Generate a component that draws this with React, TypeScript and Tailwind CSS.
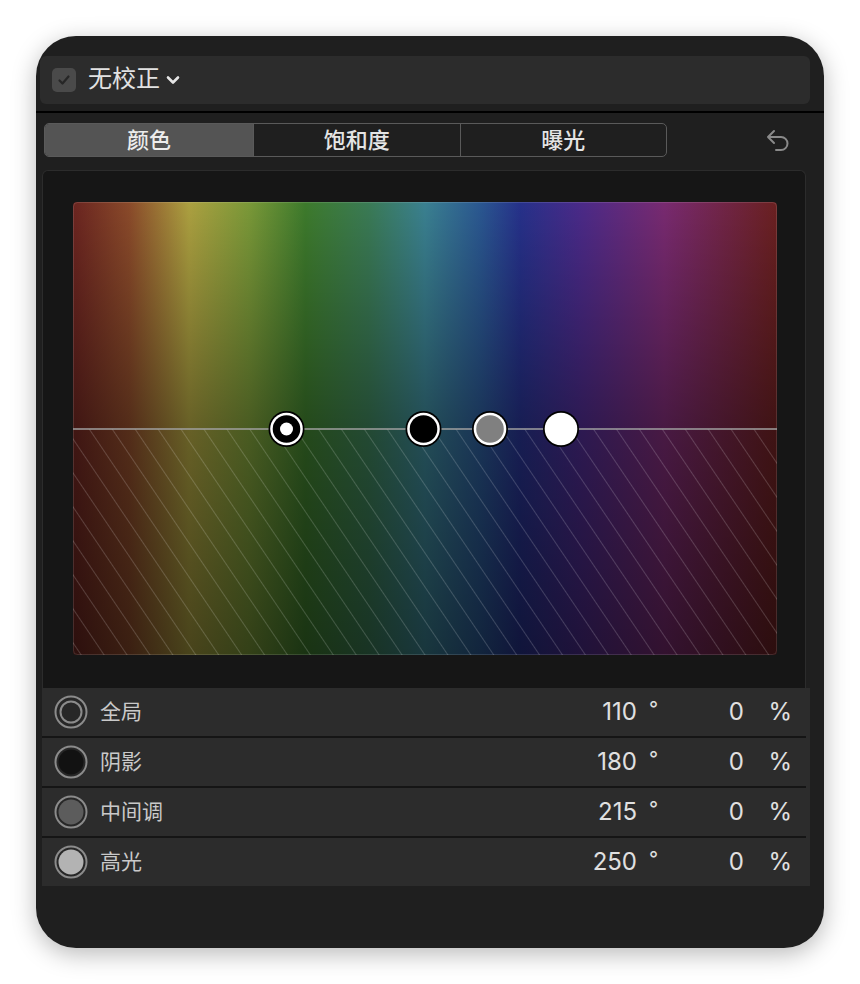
import React from "react";

type Range = {
  label: string;
  angle: string;
  amount: string;
  fill: string | null;
};

const ranges: Range[] = [
  { label: "全局", angle: "110", amount: "0", fill: null },
  { label: "阴影", angle: "180", amount: "0", fill: "#121212" },
  { label: "中间调", angle: "215", amount: "0", fill: "#5c5c5c" },
  { label: "高光", angle: "250", amount: "0", fill: "#b3b3b3" },
];

const tabs = ["颜色", "饱和度", "曝光"];

function RangeIcon({ fill }: { fill: string | null }) {
  return (
    <svg width="34" height="34" viewBox="0 0 34 34" aria-hidden>
      <circle cx="17" cy="17" r="15.5" fill="#272727" stroke="#8b8b8b" strokeWidth="2" />
      {fill ? (
        <circle cx="17" cy="17" r="12.5" fill={fill} />
      ) : (
        <circle cx="17" cy="17" r="10.5" fill="none" stroke="#8b8b8b" strokeWidth="2" />
      )}
    </svg>
  );
}

// 色板：色相横向铺开，下半部分带斜线
function ColorBoard() {
  const knobs = [
    { x: 213.5, color: "#000", dot: true },
    { x: 350.5, color: "#000", dot: false },
    { x: 417, color: "#808080", dot: false },
    { x: 488, color: "#fff", dot: false },
  ];
  return (
    <svg width="704" height="453" viewBox="0 0 704 453" className="block">
      <defs>
        <linearGradient id="hue" x1="0" x2="1" y1="0" y2="0">
          <stop offset="0" stopColor="#6a2420" />
          <stop offset="0.08" stopColor="#8a4a2a" />
          <stop offset="0.165" stopColor="#aca040" />
          <stop offset="0.25" stopColor="#7a9838" />
          <stop offset="0.33" stopColor="#3d7a2c" />
          <stop offset="0.42" stopColor="#3a7a55" />
          <stop offset="0.5" stopColor="#3a8090" />
          <stop offset="0.58" stopColor="#2a5690" />
          <stop offset="0.635" stopColor="#26318a" />
          <stop offset="0.72" stopColor="#4a2a88" />
          <stop offset="0.84" stopColor="#782a70" />
          <stop offset="1" stopColor="#6a2020" />
        </linearGradient>
        <linearGradient id="shade" x1="0" x2="0" y1="0" y2="1">
          <stop offset="0" stopColor="#000" stopOpacity="0" />
          <stop offset="0.5" stopColor="#000" stopOpacity="0.4" />
          <stop offset="1" stopColor="#000" stopOpacity="0.58" />
        </linearGradient>
        <pattern
          id="hatch"
          width="19"
          height="19"
          patternUnits="userSpaceOnUse"
          patternTransform="rotate(-34)"
        >
          <line x1="0" y1="0" x2="0" y2="19" stroke="#fff" strokeOpacity="0.25" strokeWidth="1.4" />
        </pattern>
        <clipPath id="board">
          <rect x="0" y="0" width="704" height="453" rx="4" />
        </clipPath>
      </defs>
      <g clipPath="url(#board)">
        <rect width="704" height="453" fill="url(#hue)" />
        <rect width="704" height="453" fill="url(#shade)" />
        <rect x="0" y="227" width="704" height="226" fill="url(#hatch)" />
      </g>
      <rect x="0.5" y="0.5" width="703" height="452" rx="4" fill="none" stroke="#fff" strokeOpacity="0.12" />
      <line x1="0" y1="227" x2="704" y2="227" stroke="#a0a0a0" strokeWidth="1.5" />
      {knobs.map((k) => (
        <g key={k.x}>
          <circle cx={k.x} cy="227" r="18" fill="#000" />
          <circle cx={k.x} cy="227" r="16.3" fill="#fff" />
          <circle cx={k.x} cy="227" r="13.8" fill={k.color} />
          {k.dot ? <circle cx={k.x} cy="227" r="6.5" fill="#fff" /> : null}
        </g>
      ))}
    </svg>
  );
}

export default function App() {
  return (
    <div className="flex h-[984px] w-[860px] items-start bg-white pl-[36px] pt-[36px] font-['Inter','Noto_Sans_CJK_SC',sans-serif]">
      <div className="flex h-[912px] w-[788px] flex-col overflow-hidden rounded-[40px] bg-[#1f1f1f] shadow-[0_6px_24px_rgba(0,0,0,0.28)]">
        {/* header */}
        <div className="ml-[4px] mr-[14px] mt-[20px] flex h-[48px] items-center rounded-[6px] bg-[#2c2c2c] pl-[12px]">
          <div className="flex h-[24px] w-[24px] items-center justify-center rounded-[5px] bg-[#4a4a4a]">
            <svg width="16" height="16" viewBox="0 0 16 16" aria-hidden>
              <path d="M3.5 8.5 L6.5 11.5 L12.5 4.5" fill="none" stroke="#262626" strokeWidth="2.2" strokeLinecap="round" strokeLinejoin="round" />
            </svg>
          </div>
          <span className="ml-[12px] pb-[3px] text-[24px] leading-none text-[#e2e2e2]">无校正</span>
          <svg className="ml-[6px]" width="14" height="10" viewBox="0 0 14 10" aria-hidden>
            <path d="M2 2.5 L7 7.5 L12 2.5" fill="none" stroke="#e6e6e6" strokeWidth="2.6" strokeLinecap="round" strokeLinejoin="round" />
          </svg>
        </div>

        <div className="mt-[7px] h-[2px] w-full bg-black" />

        {/* tabs */}
        <div className="mt-[10px] flex h-[34px] items-center pl-[8px]">
          <div className="flex h-[34px] w-[623px] overflow-hidden rounded-[5px] border border-[#5a5a5a]">
            {tabs.map((t, i) => (
              <div
                key={t}
                className={
                  i === 0
                    ? "flex w-[208px] items-center justify-center bg-[#545454] text-[22px] font-medium text-[#ececec]"
                    : "flex flex-1 items-center justify-center border-l border-[#5a5a5a] text-[22px] font-medium text-[#e4e4e4]"
                }
              >
                {t}
              </div>
            ))}
          </div>
          <svg className="ml-[97px]" width="28" height="28" viewBox="0 0 28 28" aria-hidden>
            <path
              d="M10 5 L4 11 L10 17 M4 11 H17 A6.5 6.5 0 0 1 17 24 H12"
              fill="none"
              stroke="#8a8a8a"
              strokeWidth="2"
              strokeLinecap="round"
              strokeLinejoin="round"
            />
          </svg>
        </div>

        {/* color board */}
        <div className="ml-[6px] mt-[13px] h-[518px] w-[764px] rounded-t-[6px] border-l border-r border-t border-[#2c2c2c] bg-[#161616] pl-[30px] pt-[31px]">
          <ColorBoard />
        </div>

        {/* ranges */}
        <div className="ml-[6px] w-[768px] bg-[#2c2c2c]">
          {ranges.map((r, i) => (
            <div key={r.label}>
              {i > 0 ? <div className="h-[2px] w-[764px] bg-[#151515]" /> : null}
              <div className="flex h-[48px] items-center pl-[12px] pr-[18px]">
                <RangeIcon fill={r.fill} />
                <span className="ml-[12px] flex-1 text-[21px] text-[#c9c9c9]">{r.label}</span>
                <span className="w-[70px] text-right text-[24px] text-[#e0e0e0]">{r.angle}</span>
                <span className="w-[47px] self-start pl-[12px] pt-[6px] text-[20px] text-[#e0e0e0]">°</span>
                <span className="w-[60px] text-right text-[24px] text-[#e0e0e0]">{r.amount}</span>
                <span className="w-[48px] text-right text-[24px] text-[#e0e0e0]">%</span>
              </div>
            </div>
          ))}
        </div>
      </div>
    </div>
  );
}
